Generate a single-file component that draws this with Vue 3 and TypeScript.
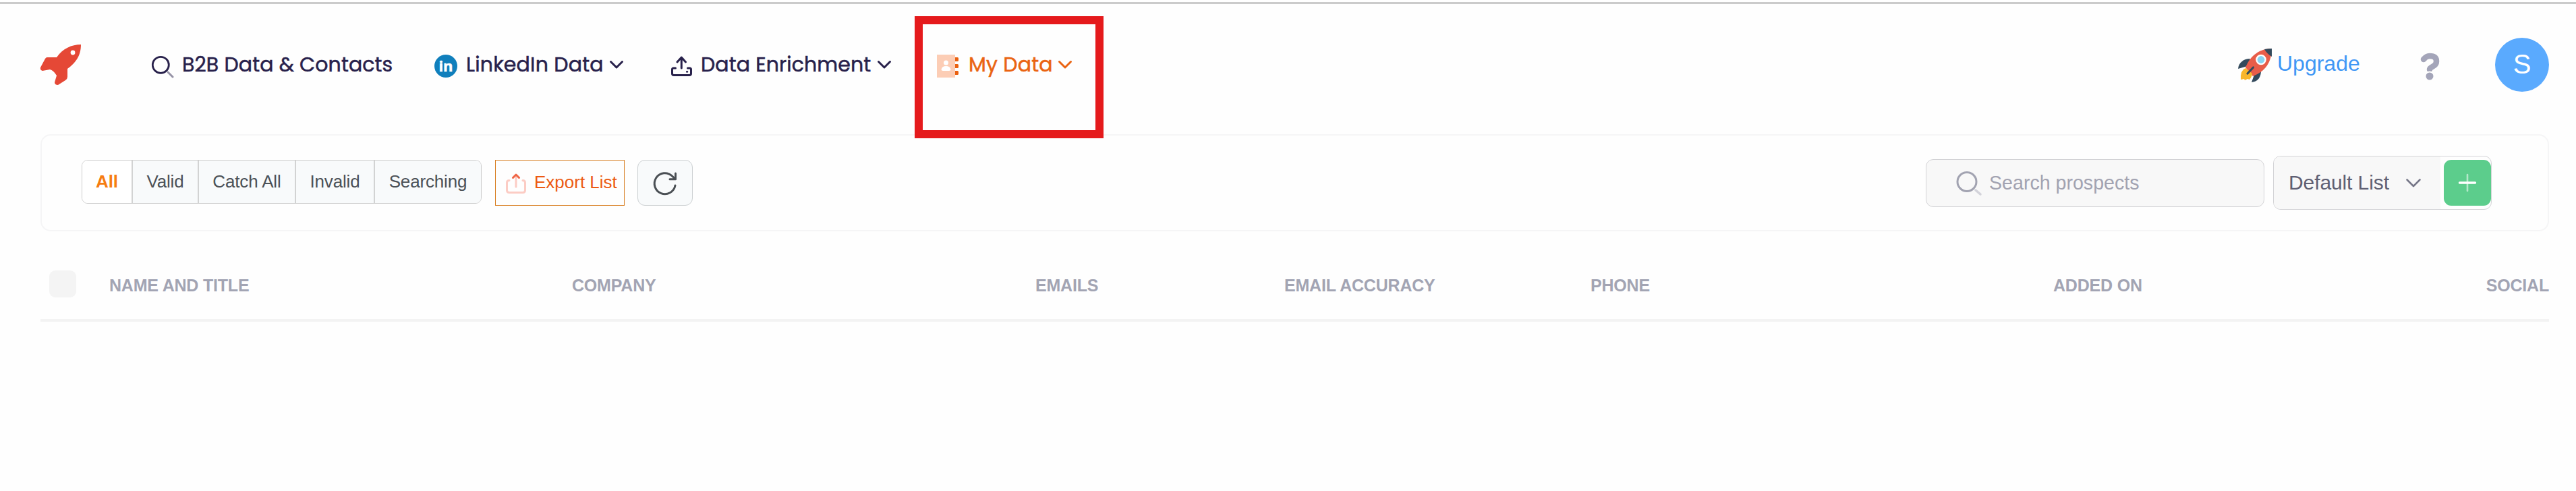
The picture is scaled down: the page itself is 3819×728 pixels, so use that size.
<script setup lang="ts">
interface Column { label: string; key: string }
const filters: string[] = ['All', 'Valid', 'Catch All', 'Invalid', 'Searching']
const columns: Column[] = [
  { label: 'NAME AND TITLE', key: 'name' },
  { label: 'COMPANY', key: 'company' },
  { label: 'EMAILS', key: 'emails' },
  { label: 'EMAIL ACCURACY', key: 'accuracy' },
  { label: 'PHONE', key: 'phone' },
  { label: 'ADDED ON', key: 'added' },
  { label: 'SOCIAL', key: 'social' },
]
</script>

<template>
  <div class="page">
    <header class="topbar">
      <svg class="logo" viewBox="0 0 60 60">
        <path fill="#e54836" d="M60 0C46 0 33 6 24 19H10Q8 19 7 21L0 34Q-1 38 3 39L14 37Q19 38 24 46L21 56Q21 60 26 60L37 53Q40 51 40 48V36C51 28 60 18 60 0Z" />
        <circle cx="48" cy="12" r="3.4" fill="#fff" />
      </svg>
      <nav class="nav">
        <a class="item b2b">
          <svg class="ico-search" viewBox="0 0 32 32" fill="none" stroke-linecap="round">
            <path d="M24 24L31 31" stroke="#9693a6" stroke-width="3" />
            <circle cx="13.3" cy="13.3" r="12" stroke="#28214b" stroke-width="2.8" />
          </svg>
          <span>B2B Data &amp; Contacts</span>
        </a>
        <a class="item linkedin">
          <i class="li-badge">in</i>
          <span>LinkedIn Data</span>
          <svg class="chev" viewBox="0 0 20 12"><path d="M1.5 1.5L10 10L18.500 1.5" /></svg>
        </a>
        <a class="item enrich">
          <svg class="ico-upload" viewBox="0 0 31 30" fill="none" stroke="#28214b" stroke-linecap="round" stroke-linejoin="round" stroke-width="3">
            <path d="M15.300 18V3M9 9L15.300 2L21.500 9" />
            <path d="M6.500 18H3.500Q1.500 18 1.500 20V26Q1.500 28.500 4 28.500H27Q29.500 28.500 29.500 26V20Q29.500 18 27.500 18H24.500" />
            <path d="M23.500 23.300H23.600" />
          </svg>
          <span>Data Enrichment</span>
          <svg class="chev" viewBox="0 0 20 12"><path d="M1.500 1.500L10 10L18.500 1.500" /></svg>
        </a>
        <a class="item mydata">
          <svg class="ico-book" viewBox="0 0 32 34">
            <path fill="#fccdb5" d="M0 0H27V34H0Z" />
            <circle cx="13.500" cy="12" r="3.500" fill="#fff" />
            <path fill="#fff" d="M6.500 22Q7.500 17 13.500 17T20.500 22Q20.500 24 18 24H9Q6.500 24 6.500 22Z" />
            <path fill="#ea600f" d="M27 4H30.500Q32 4 32 5.500V8.500Q32 10 30.500 10H27ZM27 14H30.500Q32 14 32 15.500V18.500Q32 20 30.500 20H27ZM27 24H30.500Q32 24 32 25.500V28.500Q32 30 30.500 30H27Z" />
          </svg>
          <span>My Data</span>
          <svg class="chev" viewBox="0 0 20 12"><path d="M1.500 1.500L10 10L18.500 1.500" /></svg>
        </a>
      </nav>
      <div class="account">
        <svg class="rocket" viewBox="0 0 50 50">
          <path fill="#334a5c" d="M18 15C8 15 1 21 0 30L14 26ZM34 33C34 42 30 49 20 50L25 36Z" />
          <path fill="#e85d49" d="M50 0C33 0 19 9 11 28L22 41C40 34 50 20 50 0Z" />
          <path fill="#334a5c" d="M39 1Q45 0 50 0V12Q43 8 39 1Z" />
          <circle cx="34" cy="16.500" r="7.800" fill="#fff" /><circle cx="34" cy="16.500" r="5.400" fill="#89d3f1" />
          <path fill="#f8b62b" d="M11 29Q3 32 4 46L9 45L10 47L14 45L17 46Q21 41 21 37Z" />
          <path stroke="#334a5c" stroke-width="3.200" stroke-linecap="round" d="M22.500 28L14 37" />
        </svg>
        <span class="upgrade">Upgrade</span>
        <svg class="help" viewBox="0 0 28 40">
          <path d="M4 9Q8 4 13 4Q23 4 23 12Q23 17 17 20Q13 22 13 24" fill="none" stroke="#a4a5b9" stroke-width="8.500" stroke-linecap="round" stroke-linejoin="round" />
          <circle cx="13" cy="34" r="6.500" fill="#a4a5b9" stroke="#fefefe" stroke-width="2" />
        </svg>
        <div class="avatar">S</div>
      </div>
      <div class="highlight"></div>
    </header>

    <section class="toolbar">
      <div class="filters">
        <button v-for="(f, i) in filters" :key="f" :class="['filter', 'f' + i]">{{ f }}</button>
      </div>
      <button class="export">
        <svg viewBox="0 0 30 30" fill="none" stroke-linecap="round" stroke-linejoin="round" stroke-width="3">
          <path stroke="#fcccc4" d="M5 10.500Q1.500 10.500 1.500 14V25Q1.500 28.500 5 28.500H25Q28.500 28.500 28.500 25V14Q28.500 10.500 25 10.500M15 20V3" />
          <path stroke="#ef6545" d="M10.500 6.500L15 2L19.500 6.500" />
        </svg>
        <span>Export List</span>
      </button>
      <button class="refresh">
        <svg viewBox="0 0 34 34" fill="none" stroke="#4a4f54" stroke-width="3" stroke-linecap="round" stroke-linejoin="round">
          <path d="M32 20A15.500 15.500 0 1 1 27.500 6L32 10.500M32.500 2V10.800H24" />
        </svg>
      </button>
      <div class="search">
        <svg viewBox="0 0 38 36" fill="none" stroke-linecap="round">
          <path d="M29 28L36 34" stroke="#d3d3da" stroke-width="3.500" />
          <circle cx="16" cy="15.500" r="14" stroke="#a2a3b1" stroke-width="3" />
        </svg>
        <span>Search prospects</span>
      </div>
      <div class="list">
        <div class="select">
          <span>Default List</span>
          <svg viewBox="0 0 22 13"><path d="M1.500 1.500L11 11L20.500 1.500" fill="none" stroke="#777889" stroke-width="2.600" stroke-linecap="round" stroke-linejoin="round" /></svg>
        </div>
        <button class="add">
          <svg viewBox="0 0 26 26" stroke-linecap="round"><path d="M13 1V25" stroke="#b4e8ca" stroke-width="2.600" /><path d="M1.500 13H24.500" stroke="#fff" stroke-width="3.400" /></svg>
        </button>
      </div>
    </section>

    <div class="thead">
      <div class="checkbox"></div>
      <div v-for="c in columns" :key="c.key" :class="['th', c.key]"><span>{{ c.label }}</span></div>
    </div>
  </div>
</template>

<style>
body { margin: 0; background: #fefefe; }
</style>

<style scoped>
.page { width: 3819px; height: 728px; box-sizing: border-box; overflow: hidden; background: linear-gradient(#fff 0 3px, #cbcbcb 3px 6px, #fefefe 6px); font-family: "Liberation Sans", Arial, sans-serif; }
.page * { box-sizing: border-box; }
svg { display: block; flex: none; overflow: visible; }
button { margin: 0; padding: 0; font-family: inherit; background: none; border: 0; }
span { white-space: nowrap; }
.topbar { position: relative; height: 199px; padding: 0 40px 0 60px; display: flex; align-items: flex-start; }
.logo { width: 60px; height: 60px; margin-top: 66px; }
.nav { display: flex; margin-left: 105px; padding-top: 76px; font-family: Poppins, Inter, "Open Sans", sans-serif; font-size: 30px; font-weight: 400; line-height: 40px; color: #28214b; -webkit-text-stroke: 0.5px currentColor; }
.item { display: flex; align-items: center; flex: none; height: 40px; }
.item .chev { width: 20px; height: 12px; }
.chev path { fill: none; stroke: currentColor; stroke-width: 3; stroke-linecap: round; stroke-linejoin: round; }
.b2b { width: 419px; }
.linkedin { width: 351px; }
.enrich { width: 394px; }
.ico-search { width: 32px; height: 32px; margin: 6px 13px 0 0; }
.b2b span { letter-spacing: 0.1px; }
.li-badge { flex: none; width: 34px; height: 34px; margin: 4px 13px 0 0; border-radius: 50%; background: #107fbc; color: #fff; font: bold 22px/33px "Open Sans", sans-serif; text-align: center; }
.linkedin span { width: 213px; letter-spacing: 0.2px; }
.ico-upload { width: 31px; height: 30px; margin: 4px 13px 0 0; }
.enrich span { width: 262px; letter-spacing: 0.1px; }
.ico-book { width: 32px; height: 34px; margin: 4px 15px 0 0; }
.mydata { color: #ea6412; }
.mydata span { width: 133px; letter-spacing: 0.2px; }
.account { display: flex; margin-left: auto; }
.rocket { width: 50px; height: 50px; margin-top: 72px; }
.upgrade { width: 221px; padding: 74px 0 0 8px; font-size: 32px; line-height: 40px; color: #3f97f5; }
.help { width: 28px; height: 40px; margin: 79px 82px 0 0; }
.avatar { width: 80px; height: 80px; margin-top: 56px; border-radius: 50%; background: #5aaafe; color: #fff; font-size: 40px; line-height: 79px; text-align: center; }
.highlight { position: absolute; left: 1356px; top: 24px; width: 280px; height: 181px; border: 12px solid #e51a1c; z-index: 2; }
.toolbar { height: 144px; margin: 0 40px 0 60px; padding: 36px 83px 0 59px; border: 2px solid #f5f5f6; border-radius: 15px; display: flex; align-items: flex-start; }
.toolbar > * { flex: none; }
.filters { display: flex; width: 593px; height: 65px; border: 1px solid #ccc; border-radius: 9px; overflow: hidden; }
.filter { height: 63px; border-right: 2px solid #d2d3d3; background: #f8fafb; color: #4b5157; font-size: 26px; line-height: 61px; text-align: center; letter-spacing: -0.15px; }
.f0 { width: 75px; background: #fff; color: #f67d12; font-weight: bold; }
.f1 { width: 98px; } .f2 { width: 144px; } .f3 { width: 117px; } .f4 { width: 157px; border-right: 0; }
.export { display: flex; align-items: center; width: 192px; height: 68px; margin-left: 20px; padding-left: 15px; border: 1px solid #d77c1d; color: #ec5b12; font-size: 26px; }
.export svg { width: 30px; height: 30px; margin: 2px 12px 0 0; }
.export span { padding-bottom: 1px; }
.refresh { width: 82px; height: 68px; margin-left: 19px; border: 1px solid #ccd0d2; border-radius: 11px; background: #f8fafb; padding-left: 23px; }
.refresh svg { width: 34px; height: 34px; margin-top: 2px; }
.search { display: flex; align-items: center; width: 502px; height: 71px; margin: -1px 0 0 auto; padding-left: 44px; border: 1px solid #d3d3d6; border-radius: 11px; background: #f8f8f8; color: #a2a3b1; font-size: 28.6px; }
.search svg { width: 38px; height: 36px; margin-right: 11px; }
.list { display: flex; align-items: center; width: 324px; height: 80px; margin: -6px 0 0 13px; border: 1px solid #d3d3d6; border-radius: 11px; overflow: hidden; }
.select { display: flex; align-items: center; width: 247px; height: 78px; padding-left: 22px; background: #f8f8f8; color: #5f6073; font-size: 30px; letter-spacing: -0.1px; }
.select span { width: 174px; }
.select svg { width: 22px; height: 13px; }
.add { display: flex; align-items: center; justify-content: center; width: 70px; height: 68px; margin-left: 5px; border-radius: 11px; background: #5ccd8c; }
.add svg { width: 26px; height: 26px; }
.thead { display: grid; grid-template-columns: 102px 686px 687px 369px 454px 686px 640px 1fr; align-items: center; height: 134px; margin: 0 40px 0 60px; border-bottom: 4px solid #f3f3f3; color: #a2a4b3; font-size: 25px; font-weight: bold; line-height: 30px; letter-spacing: -0.2px; }
.th { padding-top: 29px; }
.social { justify-self: end; }
.checkbox { width: 40px; height: 40px; margin: 26px 0 0 13px; border-radius: 9px; background: #f4f4f4; }
</style>
